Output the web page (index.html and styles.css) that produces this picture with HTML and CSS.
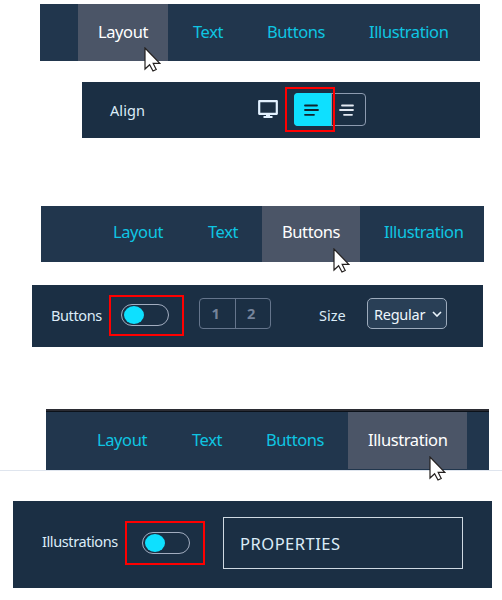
FILE: index.html
```
<!DOCTYPE html>
<html lang="en">
<head>
<meta charset="utf-8">
<title>Style settings</title>
<link rel="stylesheet" href="styles.css">
</head>
<body>
<svg class="defs" width="0" height="0">
  <symbol id="cursor" viewBox="0 0 17 25">
    <path d="M1 1V22L5.6 17.7L9 24L12.2 22.5L9.2 16.4H15.8Z" fill="#fff" stroke="#24201f" stroke-width="1.2"/>
  </symbol>
</svg>

<nav class="tabs tabs-layout">
  <a class="tab t-layout active"><span>Layout</span><svg class="cursor"><use href="#cursor"/></svg></a>
  <a class="tab t-text"><span>Text</span></a>
  <a class="tab t-buttons"><span>Buttons</span></a>
  <a class="tab t-illustration"><span>Illustration</span></a>
</nav>
<section class="panel panel-align">
  <span class="label l-align">Align</span>
  <svg class="monitor" viewBox="0 0 20 18"><path d="M1.2 1.2H18.8V13.8H1.2Z" fill="none" stroke="#e2f1ff" stroke-width="2.2" stroke-linejoin="round"/><path d="M8 14H12V16H14.5V18H5.5V16H8Z" fill="#e2f1ff"/></svg>
  <div class="group align-group">
    <span class="seg on"><svg viewBox="0 0 16 14"><path d="M2 2.5H14M2 7H15M2 11.8H11" stroke="#10232e"/></svg><i class="mark"></i></span>
    <span class="seg"><svg viewBox="0 0 16 14"><path d="M3 2.5H14M1 7H14M5 11.8H13" stroke="#e4eaf3"/></svg></span>
  </div>
</section>

<nav class="tabs tabs-buttons">
  <a class="tab t-layout"><span>Layout</span></a>
  <a class="tab t-text"><span>Text</span></a>
  <a class="tab t-buttons active"><span>Buttons</span><svg class="cursor"><use href="#cursor"/></svg></a>
  <a class="tab t-illustration"><span>Illustration</span></a>
</nav>
<section class="panel panel-buttons">
  <span class="label l-buttons">Buttons</span>
  <span class="toggle"><i class="mark"></i></span>
  <div class="group number-group"><span class="seg">1</span><span class="seg">2</span></div>
  <span class="label l-size">Size</span>
  <div class="select"><span>Regular</span><svg viewBox="0 0 10 6"><path d="M1 1L5 5L9 1" fill="none" stroke="#eaf4fc" stroke-width="1.6"/></svg></div>
</section>

<div class="ruled">
  <nav class="tabs tabs-illustration">
    <a class="tab t-layout"><span>Layout</span></a>
    <a class="tab t-text"><span>Text</span></a>
    <a class="tab t-buttons"><span>Buttons</span></a>
    <a class="tab t-illustration active"><span>Illustration</span><svg class="cursor"><use href="#cursor"/></svg></a>
  </nav>
</div>
<section class="panel panel-illustration">
  <span class="label l-illustrations">Illustrations</span>
  <span class="toggle"><i class="mark"></i></span>
  <div class="properties"><span>PROPERTIES</span></div>
</section>
</body>
</html>
```
FILE: styles.css
```
* { box-sizing: border-box; }
body {
  margin: 0;
  padding-top: 4px;
  height: 600px;
  overflow: hidden;
  background: #fff;
  font-family: "Noto Sans", "Open Sans", sans-serif;
}
.defs { position: absolute; }

.tabs {
  display: flex;
  gap: 5px;
  background: #21364d;
  font-size: 16.5px;
  line-height: 24px;
  color: #0fc5e2;
}
.tabs-layout { width: 440px; height: 57px; margin-left: 40px; padding-left: 38px; }
.tabs-buttons { width: 443px; height: 56px; margin: 68px 0 0 41px; padding-left: 52px; }
.tabs-illustration { width: 443px; height: 61px; margin-left: 46px; padding: 0 0 1px 31px; border-top: 2px solid #2b2c33; box-shadow: inset 0 1px #0b1119; }
.ruled { margin-top: 62px; border-bottom: 1px solid #dfe5ee; }

.tab { position: relative; padding: 16px 0 0 20px; white-space: nowrap; letter-spacing: -0.4px; }
.tabs-buttons .tab { padding-top: 14px; }
.tabs-illustration .tab { margin-top: 1px; }
.t-layout { width: 90px; }
.t-text { width: 69px; }
.t-buttons { width: 98px; margin-right: -1px; }
.t-illustration { width: 119px; }
.active { background: #4b5567; color: #fff; }

.cursor { position: absolute; z-index: 2; width: 17px; height: 25px; left: 66px; top: 43px; }
.t-buttons .cursor { left: 71px; top: 42px; }
.t-illustration .cursor { left: 81px; top: 44px; }

.panel { display: flex; align-items: flex-start; background: #1b2f44; }
.panel-align { width: 398px; height: 56px; margin: 21px 0 0 82px; padding-left: 28px; }
.panel-buttons { width: 451px; height: 62px; margin: 23px 0 0 32px; padding-left: 19px; }
.panel-illustration { width: 479px; height: 87px; margin: 30px 0 0 13px; padding-left: 29px; }

.label { flex: none; font-size: 14.5px; line-height: 20px; color: #dcecf8; white-space: nowrap; letter-spacing: -0.4px; }
.l-align { width: 148px; padding-top: 18px; letter-spacing: 0.1px; }
.l-buttons { width: 70px; padding-top: 20px; }
.l-size { width: 48px; margin-left: 48px; padding-top: 20px; letter-spacing: 0; }
.l-illustrations { width: 100px; padding-top: 30px; }

.monitor { width: 20px; height: 18px; margin: 18px 16px 0 0; }

.group { display: flex; width: 72px; border: 1px solid #8d9bb0; border-radius: 4px; }
.seg { position: relative; flex: 1; display: flex; align-items: center; justify-content: center; }
.seg + .seg { border-left: 1px solid #8d9bb0; }
.align-group { height: 33px; margin-top: 11px; }
.align-group .on { flex: none; width: 37px; margin: -1px 0 -1px -1px; background: #0ee0ff; border-radius: 4px 0 0 4px; }
.align-group svg { width: 16px; height: 14px; margin-right: 4px; }
.align-group path { stroke-width: 1.8; stroke-linecap: round; }
.number-group { height: 31px; margin: 13px 0 0 30px; border-color: #65758c; color: #75839a; font-size: 14.5px; font-weight: 700; }
.number-group .seg { padding: 0 3px 1px 0; }
.number-group .seg + .seg { border-color: #65758c; }

.toggle { position: relative; flex: none; width: 48px; height: 22px; border: 1px solid #a2adc0; border-radius: 11px; }
.toggle::before { content: ""; position: absolute; left: 2px; top: 1px; width: 20px; height: 18px; border-radius: 50%; background: #0ee0ff; }
.panel-buttons .toggle { margin-top: 19px; }
.panel-illustration .toggle { margin-top: 31px; }

.mark { position: absolute; z-index: 1; border: 2px solid #f00; }
.align-group .mark { left: -9px; top: -6px; width: 50px; height: 45px; }
.panel-buttons .mark { left: -13px; top: -10px; width: 75px; height: 41px; }
.panel-illustration .mark { left: -18px; top: -12px; width: 80px; height: 44px; }

.select {
  display: flex;
  align-items: center;
  justify-content: space-between;
  width: 80px;
  height: 31px;
  margin-top: 13px;
  padding: 0 4px 0 6px;
  border: 1px solid #9dabbc;
  border-radius: 5px;
  background: #293f56;
  color: #eef6fc;
  font-size: 14.5px;
  line-height: 20px;
  letter-spacing: -0.25px;
}
.select svg { width: 10px; height: 6px; }

.properties {
  width: 240px;
  height: 52px;
  margin: 16px 0 0 33px;
  padding: 14px 0 0 16px;
  border: 1px solid #cfd9e2;
  color: #dcecf8;
  font-size: 16.5px;
  line-height: 24px;
  letter-spacing: 0.5px;
}
```
